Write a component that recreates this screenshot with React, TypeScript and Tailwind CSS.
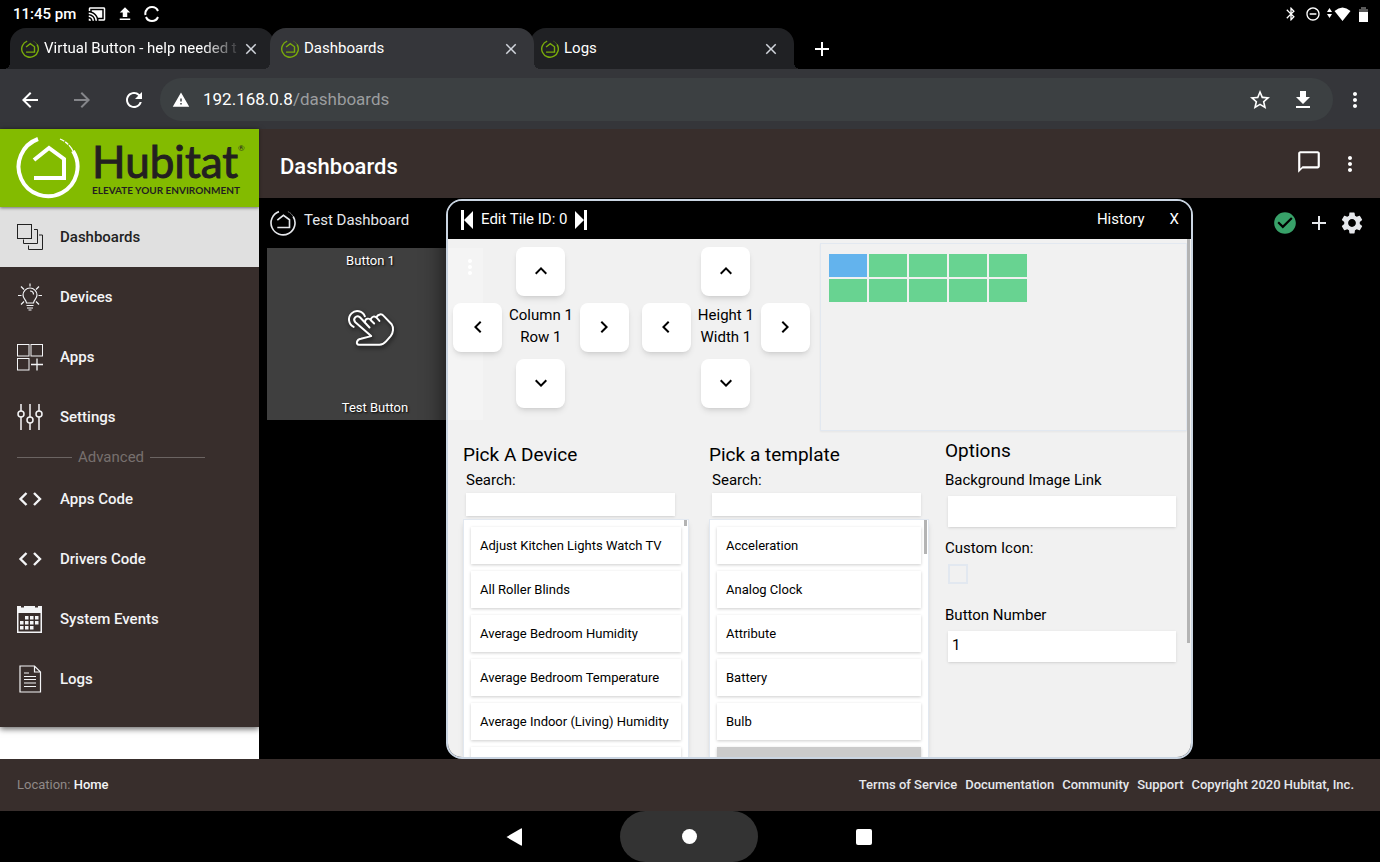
import type { ReactNode } from "react";
import { clsx } from "clsx";
import {
    MdAdd,
    MdArrowBack,
    MdArrowForward,
    MdBluetooth,
    MdCastConnected,
    MdChatBubbleOutline,
    MdCheckCircle,
    MdClose,
    MdDownload,
    MdKeyboardArrowDown,
    MdKeyboardArrowLeft,
    MdKeyboardArrowRight,
    MdKeyboardArrowUp,
    MdMoreVert,
    MdRefresh,
    MdRemoveCircleOutline,
    MdSettings,
    MdStarBorder,
    MdUpload,
    MdWarning,
} from "react-icons/md";

const HubitatMark = ({ className, stroke = 4 }: { className?: string; stroke?: number }) => (
    <svg viewBox="0 0 64 64" fill="none" stroke="currentColor" strokeWidth={stroke} className={className}>
        <path d="M22 4 A29.500 29.500 0 1 0 57 16" />
        <path d="M57 16 C54 10 49 6 44 4" strokeWidth={stroke / 3} strokeDasharray="7 1 4 1" />
        <path d="M18 25 L33 13 L48 24 V43 H18" strokeLinejoin="miter" />
    </svg>
);

const DashboardsIcon = () => (
    <svg width="26" height="26" viewBox="0 0 26 26" fill="none" stroke="currentColor">
        <rect x="0.5" y="0.5" width="14" height="14" />
        <path d="M17 5.500h3.500v14h-14v-4M22 11h3.500v14.500h-14v-4" />
    </svg>
);

const BulbIcon = () => (
    <svg width="26" height="28" viewBox="0 0 26 28" fill="none" stroke="currentColor" strokeWidth="1.200">
        <path d="M9.500 20c0-3-3.500-4-3.500-8a7 7 0 0 1 14 0c0 4-3.500 5-3.500 8z" />
        <path d="M9.500 22.500h7M10 25h6M11.500 27h3M13 8c2 0 3.500 1.500 3.500 3.500" />
        <path d="M13 0.500v3M1 12.500h3.500M21.500 12.500H25M4 3.500l3 3M22 3.500l-3 3M4 21.500l3-3M22 21.500l-3-3" />
    </svg>
);

const AppsIcon = () => (
    <svg width="26" height="27" viewBox="0 0 26 27" fill="none" stroke="currentColor">
        <rect x="0.5" y="0.5" width="11.500" height="11.500" />
        <rect x="14" y="0.5" width="11.500" height="11.500" />
        <rect x="0.5" y="14.500" width="11.500" height="11.500" />
        <path d="M14 20.500h12M20 14.500v12" strokeWidth="1.300" />
    </svg>
);

const SlidersIcon = () => (
    <svg width="26" height="26" viewBox="0 0 26 26" fill="none" stroke="currentColor" strokeWidth="1.500">
        <path d="M4 0v7M4 13v13M13 0v13M13 19v7M22 0v7M22 13v13" />
        <circle cx="4" cy="10" r="3" />
        <circle cx="13" cy="16" r="3" />
        <circle cx="22" cy="10" r="3" />
    </svg>
);

const CodeIcon = () => (
    <svg width="26" height="14" viewBox="0 0 26 14" fill="none" stroke="currentColor" strokeWidth="2.400">
        <path d="M9.500 1L3.500 7l6 6M17 1l6 6-6 6" />
    </svg>
);

const CalendarIcon = () => (
    <svg width="26" height="27" viewBox="0 0 26 27" fill="currentColor">
        <path fillRule="evenodd" d="M0 0h4v1.500h3V0h11v1.500h3V0h4v27H0zM1.500 7v18.500h22V7z" />
        <path d="M8 10h3.500v3.500H8zM13 10h3.500v3.500H13zM18 10h3.500v3.500H18zM3 15h3.500v3.500H3zM8 15h3.500v3.500H8zM13 15h3.500v3.500H13zM18 15h3.500v3.500H18zM3 20h3.500v3.500H3zM8 20h3.500v3.500H8zM13 20h3.500v3.500H13z" />
    </svg>
);

const LogsIcon = () => (
    <svg width="26" height="28" viewBox="0 0 26 28" fill="none" stroke="currentColor" strokeWidth="1.200">
        <path d="M3 1h14.500l6 6v20H3zM17.500 1v6h6M7 8h5M7 11.500h12M7 14.500h12M7 18h12M7 21.500h12" />
    </svg>
);

const PointerIcon = () => (
    <svg
        viewBox="0 0 145 115"
        fill="none"
        stroke="currentColor"
        strokeWidth="6"
        strokeLinecap="round"
        strokeLinejoin="round"
        className="h-[38px] w-12 drop-shadow-[1px_2px_2px_rgba(0,0,0,0.7)]"
    >
        <path d="M20 54 A25 25 0 1 1 54 22" />
        <path d="M68 56 L39 25 C28 16 16 30 25 40 L73 82 L42 90 C28 92 26 108 36 108 H98 C104 108 112 105 118 98 L132 82 C140 72 142 56 135 46 L110 20 C105 14 94 15 89 24" />
        <path d="M54 40 C55 28 66 26 72 34 L82 44 M72 32 C74 22 84 20 90 27 L98 36" />
    </svg>
);

const SkipIcon = ({ flip }: { flip?: boolean }) => (
    <svg width="14" height="20" viewBox="0 0 14 20" fill="currentColor" className={clsx(flip && "-scale-x-100")}>
        <path d="M1 0h3v20H1zM4 10l9-9v18z" />
    </svg>
);

const tabs = [
    { title: "Virtual Button - help needed t", active: false },
    { title: "Dashboards", active: true },
    { title: "Logs", active: false },
];

const mainLinks = [
    { label: "Dashboards", icon: <DashboardsIcon />, active: true },
    { label: "Devices", icon: <BulbIcon /> },
    { label: "Apps", icon: <AppsIcon /> },
    { label: "Settings", icon: <SlidersIcon /> },
];

const advancedLinks = [
    { label: "Apps Code", icon: <CodeIcon /> },
    { label: "Drivers Code", icon: <CodeIcon /> },
    { label: "System Events", icon: <CalendarIcon /> },
    { label: "Logs", icon: <LogsIcon /> },
];

const devices = [
    "Adjust Kitchen Lights Watch TV",
    "All Roller Blinds",
    "Average Bedroom Humidity",
    "Average Bedroom Temperature",
    "Average Indoor (Living) Humidity",
];

const templates = ["Acceleration", "Analog Clock", "Attribute", "Battery", "Bulb"];

const footerLinks = ["Terms of Service", "Documentation", "Community", "Support", "Copyright 2020 Hubitat, Inc."];

const StatusBar = () => (
    <div className="flex h-7 items-center justify-between pr-3 pl-[13px]">
        <div className="flex items-center gap-2.5">
            <span className="mr-0.5 text-[15px] font-medium">11:45 pm</span>
            <MdCastConnected className="size-[18px]" />
            <MdUpload className="size-[18px]" />
            <svg width="16" height="16" viewBox="0 0 16 16" fill="none" stroke="currentColor" strokeWidth="2">
                <path d="M2 5a6.500 6.500 0 0 1 12 0M2 11a6.500 6.500 0 0 0 12 0M2 4.500A7 7 0 0 0 1.500 9" />
            </svg>
        </div>
        <div className="flex items-center">
            <MdBluetooth className="mr-1.5 size-4" />
            <MdRemoveCircleOutline className="mr-1.5 size-4" />
            <svg width="24" height="14" viewBox="0 0 24 14" fill="currentColor" className="mr-2">
                <path d="M0 5l2.500-4L5 5zM0 7h5l-2.500 4zM7.500 4Q15.500-3 23.500 4L15.500 14z" />
            </svg>
            <svg width="9" height="15" viewBox="0 0 9 15" fill="currentColor">
                <path d="M2 0h5v2h2v3H0V2h2z" opacity="0.35" />
                <path d="M0 5h9v10H0z" />
            </svg>
        </div>
    </div>
);

const BrowserTabs = () => (
    <div className="flex h-[41px] pl-3.5">
        {tabs.map((tab) => (
            <div
                key={tab.title}
                className={clsx(
                    "relative -ml-1 flex w-[264px] items-center rounded-t-2xl pr-3.5 pl-[11px]",
                    "before:absolute before:bottom-0 before:-left-1.5 before:size-1.5 after:absolute after:-right-1.5 after:bottom-0 after:size-1.5",
                    tab.active
                        ? "z-10 bg-[#35363a] before:bg-[radial-gradient(circle_at_0_0,transparent_6px,#35363a_6px)] after:bg-[radial-gradient(circle_at_100%_0,transparent_6px,#35363a_6px)]"
                        : "bg-[#202124] before:bg-[radial-gradient(circle_at_0_0,transparent_6px,#202124_6px)] after:bg-[radial-gradient(circle_at_100%_0,transparent_6px,#202124_6px)]"
                )}
            >
                <HubitatMark className="mr-[5px] size-[18px] shrink-0 text-[#79ab0b]" stroke={5} />
                <span
                    className={clsx(
                        "flex-1 overflow-hidden text-[15px] whitespace-nowrap",
                        tab.title.length > 20 && "[mask-image:linear-gradient(to_right,black_80%,transparent)]"
                    )}
                >
                    {tab.title}
                </span>
                <button aria-label="Close tab" className="text-gray-300">
                    <MdClose className="size-[18px]" />
                </button>
            </div>
        ))}
        <button aria-label="New tab" className="ml-4">
            <MdAdd className="size-6" />
        </button>
    </div>
);

const AddressBar = () => (
    <div className="flex h-[60px] items-center bg-[#35363a] pt-px pr-[13px] pl-[18px]">
        <button aria-label="Back">
            <MdArrowBack className="size-6" />
        </button>
        <button aria-label="Forward" className="ml-7 text-[#85868a]">
            <MdArrowForward className="size-6" />
        </button>
        <button aria-label="Reload" className="ml-7">
            <MdRefresh className="size-6" />
        </button>
        <div className="ml-3.5 flex h-[43px] flex-1 items-center rounded-full bg-[#3c4042] pr-[18px] pl-3">
            <MdWarning className="mr-[13px] size-[18px]" />
            <span className="flex-1 text-[17px]">
                192.168.0.8<span className="text-[#9b9d9f]">/dashboards</span>
            </span>
            <button aria-label="Bookmark" className="mr-[19px]">
                <MdStarBorder className="size-6" />
            </button>
            <button aria-label="Downloads">
                <MdDownload className="size-6" />
            </button>
        </div>
        <button aria-label="Browser menu" className="ml-2.5">
            <MdMoreVert className="size-6" />
        </button>
    </div>
);

const SideLink = ({ label, icon, active }: { label: string; icon: ReactNode; active?: boolean }) => (
    <a
        href="#"
        className={clsx(
            "flex h-[60px] items-center gap-[17px] pl-[17px] font-medium",
            active ? "bg-[#e0e0e0] text-[#222]" : "text-gray-100"
        )}
    >
        {icon}
        <span className="text-[15px]">{label}</span>
    </a>
);

const Sidebar = () => (
    <aside className="w-[259px] shrink-0 bg-white">
        <div className="bg-[#382e2c] pb-[18px] shadow-[0_2px_6px_rgba(0,0,0,0.6)]">
            <div className="relative flex h-[78px] items-center bg-[#83bb00] pb-0.5 pl-4 shadow-[0_1px_3px_rgba(0,0,0,0.5)]">
                <HubitatMark className="size-16 text-white" />
                <div className="ml-3 text-[#231f20]">
                    <div className="flex font-[Lato] text-[44px] leading-[46px] [-webkit-text-stroke:1px_#231f20]">
                        Hubitat<span className="text-[8px] leading-5 [-webkit-text-stroke:0px]">®</span>
                    </div>
                    <div className="font-[Lato] text-[10px] leading-3 font-bold">ELEVATE YOUR ENVIRONMENT</div>
                </div>
            </div>
            <nav>
                {mainLinks.map((link) => (
                    <SideLink key={link.label} {...link} />
                ))}
                <div className="mr-[54px] ml-[17px] flex h-[22px] items-center gap-1.5 pb-0.5 text-[15px] text-[#77706e]">
                    <span className="h-px flex-1 bg-[#6b6462]" />
                    Advanced
                    <span className="h-px flex-1 bg-[#6b6462]" />
                </div>
                {advancedLinks.map((link) => (
                    <SideLink key={link.label} {...link} />
                ))}
            </nav>
        </div>
    </aside>
);

const PadButton = ({ label, className, children }: { label: string; className?: string; children: ReactNode }) => (
    <button
        aria-label={label}
        className={clsx("flex size-[49px] items-center justify-center rounded-lg bg-white pb-0.5 shadow-md", className)}
    >
        {children}
    </button>
);

const Pad = ({ lines }: { lines: [string, string] }) => (
    <div className="grid grid-cols-[auto_auto_auto] content-start items-center justify-items-center gap-y-[7px]">
        <PadButton label={`${lines[0]} up`} className="col-start-2">
            <MdKeyboardArrowUp className="size-6" />
        </PadButton>
        <PadButton label={`${lines[1]} left`} className="col-start-1">
            <MdKeyboardArrowLeft className="size-6" />
        </PadButton>
        <div className="px-[7px] pb-1 text-center text-[15px] leading-[22px] whitespace-nowrap">
            {lines[0]}
            <br />
            {lines[1]}
        </div>
        <PadButton label={`${lines[1]} right`}>
            <MdKeyboardArrowRight className="size-6" />
        </PadButton>
        <PadButton label={`${lines[0]} down`} className="col-start-2">
            <MdKeyboardArrowDown className="size-6" />
        </PadButton>
    </div>
);

interface PickerProps {
    id: string;
    title: string;
    items: string[];
    nextSelected?: boolean;
    className: string;
    thumbClass: string;
}

const Picker = ({ id, title, items, nextSelected, className, thumbClass }: PickerProps) => (
    <section className={clsx("flex min-h-0 flex-col", className)}>
        <h2 className="text-[19px] leading-7">{title}</h2>
        <label htmlFor={id} className="pl-[3px] text-[15px] leading-[22px]">
            Search:
        </label>
        <input id={id} className="mt-0.5 mr-2 ml-[3px] h-[23px] max-w-[209px] bg-white px-1 shadow-sm outline-none" />
        <div className="mt-[3px] flex min-h-0 flex-1 overflow-hidden border border-b-0 border-slate-200 bg-white pl-[7px] shadow-md">
            <ul className="min-w-0 flex-1 space-y-[7px] pt-[7px]">
                {items.map((item) => (
                    <li key={item}>
                        <button className="block h-[37px] w-full truncate bg-white px-[9px] text-left text-[13px] shadow-[0_1px_3px_rgba(0,0,0,0.2)]">
                            {item}
                        </button>
                    </li>
                ))}
                <li className={clsx("h-[37px] shadow-[0_1px_3px_rgba(0,0,0,0.2)]", nextSelected && "bg-[#cbcbcb]")} />
            </ul>
            <div className={clsx("mr-px ml-[3px] w-[3px] bg-[#b4b4b4]", thumbClass)} />
        </div>
    </section>
);

const TileEditor = () => (
    <div
        role="dialog"
        aria-label="Edit Tile"
        className="absolute inset-x-[187px] top-px bottom-0 flex flex-col overflow-hidden rounded-2xl border-2 border-slate-300 text-black shadow-[0_0_24px_rgba(0,0,0,0.7)]"
    >
        <div className="flex h-[38px] shrink-0 items-center gap-[7px] bg-black px-3 text-[15px] text-white">
            <button aria-label="Previous tile">
                <SkipIcon />
            </button>
            <span className="pb-0.5">Edit Tile ID: 0</span>
            <button aria-label="Next tile">
                <SkipIcon flip />
            </button>
            <button className="ml-auto pb-0.5">History</button>
            <button aria-label="Close" className="ml-[18px] pb-0.5">
                X
            </button>
        </div>
        <div className="flex min-h-0 flex-1 bg-white/[0.945]">
            <div className="flex min-w-0 flex-1 flex-col">
                <div className="flex h-48 shrink-0 pt-1 pl-[5px]">
                    <div className="flex gap-[13px] pt-1">
                        <Pad lines={["Column 1", "Row 1"]} />
                        <Pad lines={["Height 1", "Width 1"]} />
                    </div>
                    <div className="ml-2.5 flex-1 border border-slate-200 shadow-xs">
                        <div className="grid grid-cols-[repeat(5,38px)] gap-0.5 pt-2.5 pl-2">
                            {Array.from({ length: 10 }, (_, i) => (
                                <div key={i} className={clsx("h-[23px]", i === 0 ? "bg-[#63b3ed]" : "bg-[#68d391]")} />
                            ))}
                        </div>
                    </div>
                </div>
                <div className="flex min-h-0 flex-1 pt-2.5 pr-[11px] pl-[15px]">
                    <Picker
                        id="device-search"
                        title="Pick A Device"
                        items={devices}
                        className="mr-5 flex-[227]"
                        thumbClass="h-1.5"
                    />
                    <Picker
                        id="template-search"
                        title="Pick a template"
                        items={templates}
                        nextSelected
                        className="mr-4 flex-[219]"
                        thumbClass="h-[34px]"
                    />
                    <section className="flex flex-[232] flex-col text-[15px] leading-[22px]">
                        <h2 className="-mt-1 mb-1 text-[19px] leading-7">Options</h2>
                        <label htmlFor="bg-link">Background Image Link</label>
                        <input id="bg-link" className="mt-[5px] mb-2.5 ml-[3px] h-[31px] bg-white px-1 shadow outline-none" />
                        <label htmlFor="custom-icon">Custom Icon:</label>
                        <input
                            id="custom-icon"
                            type="checkbox"
                            className="mt-[5px] mb-5 ml-[3px] size-5 appearance-none border-2 border-slate-200"
                        />
                        <label htmlFor="button-number">Button Number</label>
                        <input
                            id="button-number"
                            defaultValue="1"
                            className="mt-[5px] ml-[3px] h-[31px] bg-white px-1 pb-1 shadow outline-none"
                        />
                    </section>
                </div>
            </div>
            <div className="mr-px h-[404px] w-[3px] shrink-0 bg-[#b4b4b4]" />
        </div>
    </div>
);

const Tile = () => (
    <div className="ml-2 flex h-[172px] w-[216px] flex-col justify-between bg-[#3f3f3f] text-[13px] [text-shadow:1px_1px_2px_black]">
        <div className="flex h-[26px] items-center">
            <span className="flex-1 pl-4 text-center">Button 1</span>
            <button aria-label="Tile menu" className="mt-3 mr-px">
                <MdMoreVert className="size-6" />
            </button>
        </div>
        <div className="mr-2 flex justify-center pb-4">
            <PointerIcon />
        </div>
        <span className="pb-[3px] text-center">Test Button</span>
    </div>
);

const Dashboard = () => (
    <main className="flex min-w-0 flex-1 flex-col">
        <header className="flex h-[69px] items-center bg-[#382e2c] pr-[18px] pl-[21px]">
            <h1 className="flex-1 pt-1.5 text-[22px] font-medium">Dashboards</h1>
            <button aria-label="Messages" className="mr-4 pb-1">
                <MdChatBubbleOutline className="size-[26px]" />
            </button>
            <button aria-label="More">
                <MdMoreVert className="size-6" />
            </button>
        </header>
        <div className="relative flex-1 overflow-hidden bg-black">
            <div className="flex h-[50px] items-center pr-[15px] pl-[11px] text-gray-200">
                <HubitatMark className="mr-2 size-[26px]" stroke={4} />
                <span className="flex-1 pb-1.5 text-[15px]">Test Dashboard</span>
                <MdCheckCircle className="mr-[9px] size-[26px] text-[#38a169]" />
                <button aria-label="Add tile" className="mr-2">
                    <MdAdd className="size-6" />
                </button>
                <button aria-label="Dashboard settings">
                    <MdSettings className="size-[26px]" />
                </button>
            </div>
            <Tile />
            <TileEditor />
        </div>
    </main>
);

const Footer = () => (
    <footer className="flex h-[52px] items-center justify-between bg-[#382e2c] pr-[26px] pl-[17px] text-[13px]">
        <div className="text-[#8f8987]">
            Location: <span className="font-medium text-gray-100">Home</span>
        </div>
        <div className="flex gap-2 font-medium text-gray-200">
            {footerLinks.map((link) => (
                <a key={link} href="#">
                    {link}
                </a>
            ))}
        </div>
    </footer>
);

const AndroidNav = () => (
    <div className="flex h-[51px] justify-center gap-[37px] pr-0.5">
        <button aria-label="Back" className="flex w-[138px] items-center justify-center">
            <svg width="16" height="18" viewBox="0 0 16 18" fill="currentColor">
                <path d="M0.500 9L15 0.500Q16 0 16 1v16q0 1-1 0.500z" />
            </svg>
        </button>
        <button aria-label="Home" className="flex w-[138px] items-center justify-center rounded-full bg-[#333]">
            <span className="size-[15px] rounded-full bg-white" />
        </button>
        <button aria-label="Recents" className="flex w-[138px] items-center justify-center">
            <span className="size-4 rounded-xs bg-white" />
        </button>
    </div>
);

export default function App() {
    return (
        <div className="flex min-h-screen flex-col bg-black font-[Roboto,sans-serif] text-white">
            <StatusBar />
            <BrowserTabs />
            <AddressBar />
            <div className="flex flex-1">
                <Sidebar />
                <Dashboard />
            </div>
            <Footer />
            <AndroidNav />
        </div>
    );
}
